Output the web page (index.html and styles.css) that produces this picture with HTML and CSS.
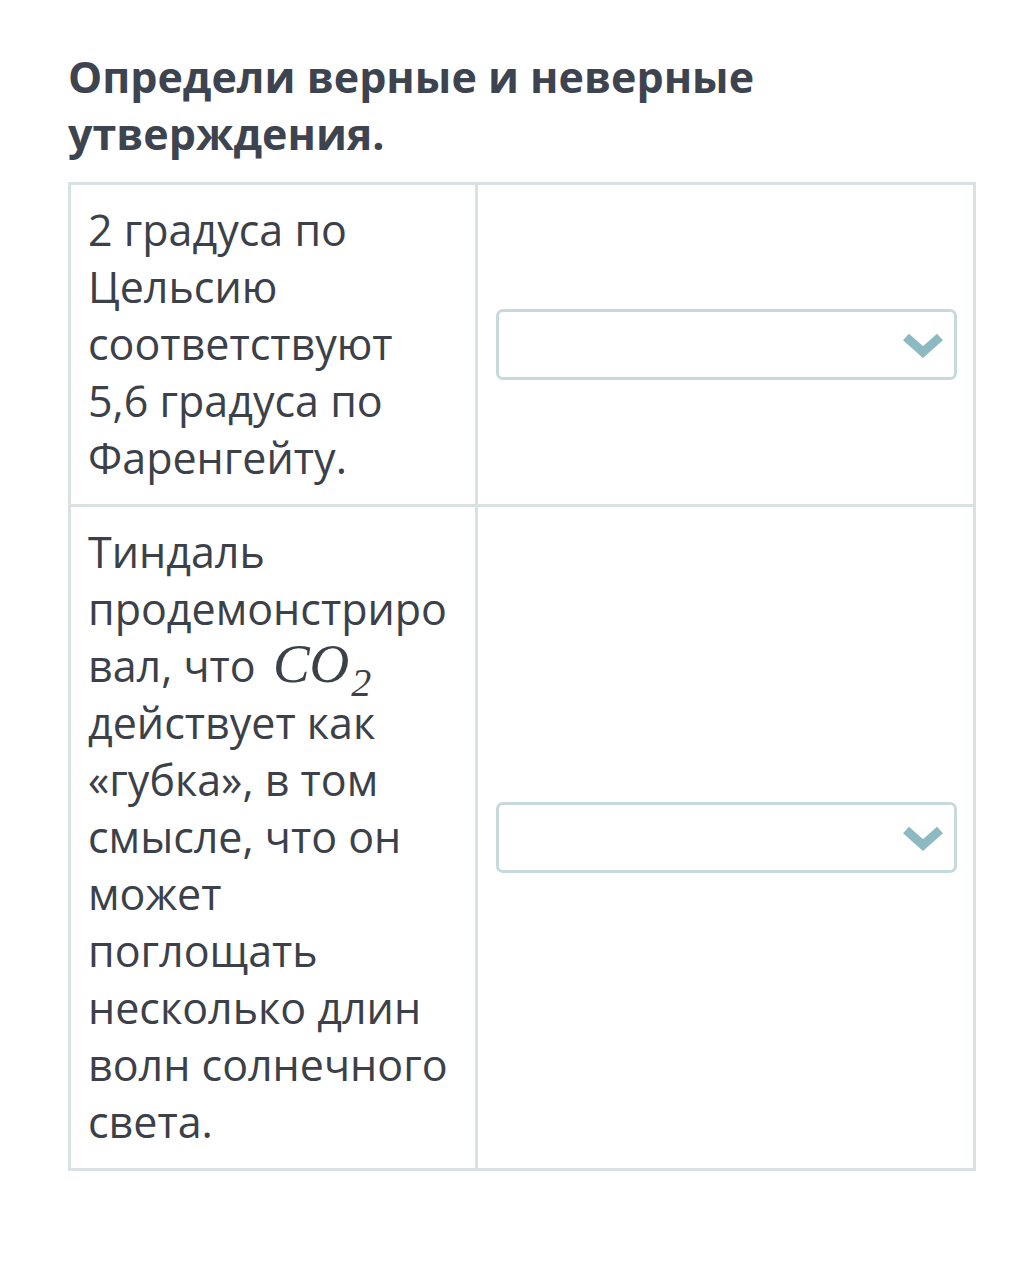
FILE: index.html
```html
<!DOCTYPE html>
<html lang="ru">
<head>
<meta charset="utf-8">
<link rel="stylesheet" href="styles.css">
</head>
<body>
<main class="page">
  <h1 class="title">Определи верные и неверные утверждения.</h1>
  <table class="quiz">
    <tr>
      <td class="stmt">2 градуса по Цельсию соответствуют 5,6 градуса по Фаренгейту.</td>
      <td class="answer">
        <div class="select">
          <svg class="chev" viewBox="0 0 42 28" width="42" height="28"><path d="M4 6 L21 21 L38 6" fill="none" stroke="#8dbac2" stroke-width="9" stroke-linecap="butt" stroke-linejoin="miter"/></svg>
        </div>
      </td>
    </tr>
    <tr>
      <td class="stmt">Тиндаль продемонстрировал, что <span class="math">CO<span class="sub">2</span></span> действует как «губка», в том смысле, что он может поглощать несколько длин волн солнечного света.</td>
      <td class="answer">
        <div class="select">
          <svg class="chev" viewBox="0 0 42 28" width="42" height="28"><path d="M4 6 L21 21 L38 6" fill="none" stroke="#8dbac2" stroke-width="9" stroke-linecap="butt" stroke-linejoin="miter"/></svg>
        </div>
      </td>
    </tr>
  </table>
</main>
</body>
</html>
```
FILE: styles.css
```css
html, body {
  margin: 0;
  padding: 0;
  background: #ffffff;
}
body {
  font-family: "Open Sans", "Noto Sans", sans-serif;
  color: #3d424a;
}
.page {
  padding: 48px 54px 0 68px;
}
.title {
  margin: 0 0 20px 0;
  font-size: 43px;
  line-height: 57px;
  font-weight: 700;
  color: #3d444f;
  width: 800px;
}
.quiz {
  border-collapse: collapse;
  width: 908px;
}
.quiz td {
  border: 3px solid #d9e1e2;
  vertical-align: middle;
}
.stmt {
  width: 370px;
  padding: 16px 17px 18px 17px;
  font-size: 43px;
  line-height: 57px;
  color: #3c4149;
  overflow-wrap: anywhere;
}
.answer {
  padding: 0 16px 0 18px;
}
.select {
  height: 65px;
  border: 3px solid #c6dadd;
  border-radius: 7px;
  display: flex;
  align-items: center;
  justify-content: flex-end;
  padding-right: 10px;
}
.chev {
  display: block;
  margin-top: 1px;
}
.math {
  font-family: "Liberation Serif", "DejaVu Serif", serif;
  font-style: italic;
  font-size: 55px;
  line-height: 0;
  margin-left: 6px;
}
.math .sub {
  display: inline-block;
  font-size: 40px;
  line-height: 0.7;
  position: relative;
  top: 14px;
  margin-left: 2px;
}
```
